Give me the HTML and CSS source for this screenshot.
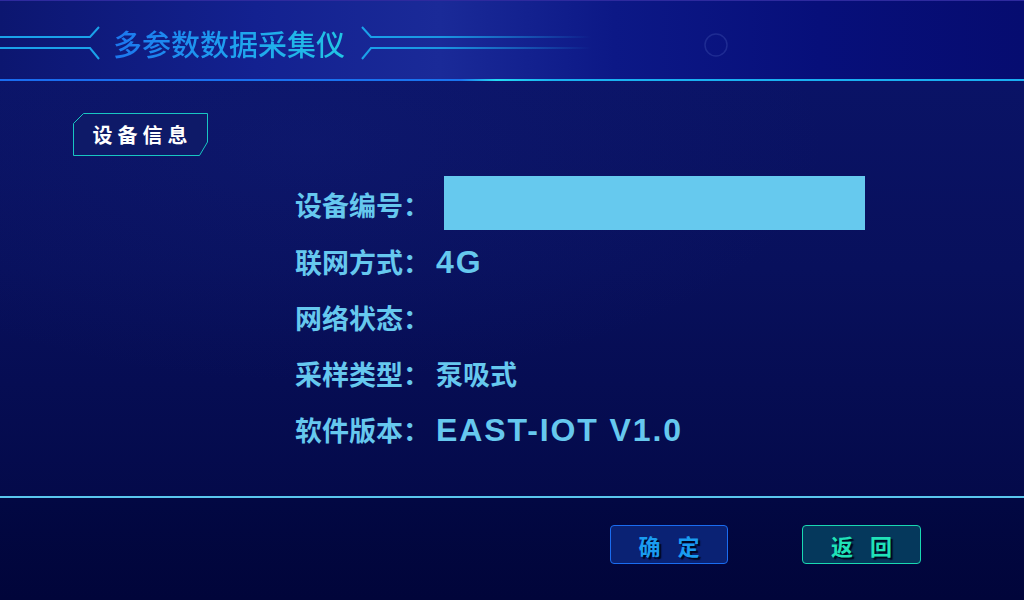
FILE: index.html
```html
<!DOCTYPE html>
<html lang="zh-CN">
<head>
<meta charset="utf-8">
<title>多参数数据采集仪</title>
<link rel="stylesheet" href="styles.css">
</head>
<body>
<div class="screen">
  <header class="header">
    <svg class="deco-left" width="100" height="42" viewBox="0 0 100 42">
      <path d="M0 15 H90 L99 5 M0 26 H90 L99 37" fill="none" stroke="#1aa2ea" stroke-width="2"/>
    </svg>
    <h1 class="title">多参数数据采集仪</h1>
    <svg class="deco-right" width="380" height="42" viewBox="0 0 380 42">
      <defs>
        <linearGradient id="fade" gradientUnits="userSpaceOnUse" x1="0" y1="0" x2="230" y2="0">
          <stop offset="0" stop-color="#1aa2ea" stop-opacity="1"/>
          <stop offset="0.35" stop-color="#1aa2ea" stop-opacity="0.9"/>
          <stop offset="1" stop-color="#1aa2ea" stop-opacity="0"/>
        </linearGradient>
      </defs>
      <path d="M1 5 L10 15 H230 M1 37 L10 26 H230" fill="none" stroke="url(#fade)" stroke-width="2"/>
      <circle cx="355" cy="23" r="11" fill="none" stroke="#1e2b92" stroke-width="1.5"/>
    </svg>
  </header>

  <main class="main">
    <div class="tag">
      <svg class="tag-frame" width="135" height="43" viewBox="0 0 135 43">
        <polygon points="0.5,10.5 10.5,0.5 134.5,0.5 134.5,29 126.5,42.5 0.5,42.5" fill="#0e1a68" stroke="#18c6c2" stroke-width="1"/>
      </svg>
      <span class="tag-text">设备信息</span>
    </div>

    <div class="info">
      <div class="row row-first">
        <span class="label">设备编号：</span>
        <div class="id-box"></div>
      </div>
      <div class="row">
        <span class="label">联网方式：</span>
        <span class="value latin">4G</span>
      </div>
      <div class="row">
        <span class="label">网络状态：</span>
      </div>
      <div class="row">
        <span class="label">采样类型：</span>
        <span class="value">泵吸式</span>
      </div>
      <div class="row">
        <span class="label">软件版本：</span>
        <span class="value latin">EAST-IOT V1.0</span>
      </div>
    </div>
  </main>

  <footer class="footer">
    <button class="btn btn-ok">确 定</button>
    <button class="btn btn-back">返 回</button>
  </footer>
</div>
</body>
</html>
```

FILE: styles.css
```css
* {
  box-sizing: border-box;
}

html, body {
  margin: 0;
  padding: 0;
  width: 1024px;
  height: 600px;
  overflow: hidden;
  background: #040a50;
  font-family: "Noto Sans CJK SC", "Noto Sans", sans-serif;
}

.screen {
  width: 1024px;
  height: 600px;
  display: flex;
  flex-direction: column;
  background: #040a50;
}

/* Header */
.header {
  height: 81px;
  flex: none;
  display: flex;
  align-items: flex-start;
  padding-top: 21px;
  border-top: 1px solid #2e2a9e;
  background:
    linear-gradient(90deg, #0c1670 0%, #132190 25%, #1a2a98 43%, #0c1886 60%, #070f7a 80%, #060c70 100%);
  position: relative;
}

.header::after {
  content: "";
  position: absolute;
  left: 0;
  right: 0;
  bottom: 0;
  height: 2px;
  background: linear-gradient(90deg, #1a6cf0 0%, #1a74f0 45%, #24dcf4 48.5%, #1ab2f2 54%, #1aaef2 100%);
}

.deco-left,
.deco-right {
  flex: none;
  display: block;
}

.title {
  margin: 0 16px 0 13px;
  width: 232px;
  height: 42px;
  line-height: 42px;
  font-size: 29px;
  font-weight: 500;
  white-space: nowrap;
  color: #1f8cf0;
  background: linear-gradient(90deg, #1c76ee 0%, #1e9cf0 45%, #22c6e4 100%);
  -webkit-background-clip: text;
  background-clip: text;
  -webkit-text-fill-color: transparent;
}

/* Main */
.main {
  height: 417px;
  flex: none;
  padding: 32px 0 0 73px;
  position: relative;
  background:
    radial-gradient(ellipse 520px 240px at 30% 15%, rgba(40,60,170,0.12), rgba(40,60,170,0) 100%),
    linear-gradient(180deg, #0a1366 0%, #08105c 45%, #040a4a 100%);
}

.main::after {
  content: "";
  position: absolute;
  left: 0;
  right: 0;
  bottom: 0;
  height: 2px;
  background: #5ac6ee;
}

.tag {
  position: relative;
  width: 135px;
  height: 43px;
  display: flex;
  align-items: center;
  justify-content: center;
}

.tag-frame {
  position: absolute;
  left: 0;
  top: 0;
}

.tag-text {
  position: relative;
  font-size: 20px;
  font-weight: 700;
  color: #ffffff;
  letter-spacing: 5px;
  padding-left: 4px;
  line-height: 1;
}

.info {
  margin: 20px 0 0 222px;
  display: flex;
  flex-direction: column;
}

.row {
  height: 56px;
  display: flex;
  align-items: center;
  color: #66c8ee;
}

.row-first {
  height: 58px;
  align-items: flex-start;
}

.row-first .label {
  margin-top: 13px;
}

.label {
  font-size: 27px;
  font-weight: 700;
  line-height: 32px;
  white-space: nowrap;
}

.value {
  font-size: 27px;
  font-weight: 700;
  line-height: 32px;
  margin-left: 6px;
  white-space: nowrap;
}

.value.latin {
  font-family: "Liberation Sans", Arial, sans-serif;
  font-size: 32px;
  letter-spacing: 1.9px;
  margin-left: 6px;
}

.id-box {
  width: 421px;
  height: 54px;
  margin-left: 14px;
  background: #66c9ee;
}

/* Footer */
.footer {
  flex: 1;
  display: flex;
  justify-content: flex-end;
  align-items: flex-start;
  gap: 74px;
  padding: 27px 103px 0 0;
  background: linear-gradient(180deg, #020843 0%, #01053a 100%);
}

.btn {
  width: 119px;
  height: 39px;
  border-radius: 4px;
  font-family: "Noto Sans CJK SC", sans-serif;
  font-size: 22px;
  font-weight: 700;
  letter-spacing: 6px;
  padding: 0 0 0 6px;
  line-height: 1;
  text-shadow: 2px 2px 1px #000620;
  cursor: pointer;
}

.btn-ok {
  width: 118px;
  background: #0a2274;
  border: 1px solid #1a6cf0;
  color: #1a9cf0;
}

.btn-back {
  background: #05385c;
  border: 1px solid #19d8b2;
  color: #20e2b8;
}
```
